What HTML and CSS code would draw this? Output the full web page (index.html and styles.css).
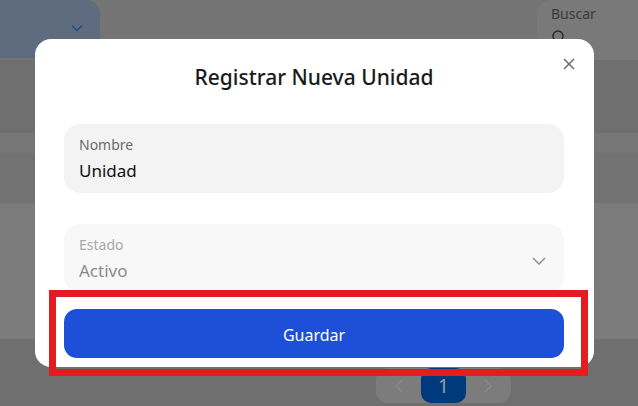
FILE: index.html
```html
<!DOCTYPE html>
<html lang="es">
<head>
<meta charset="utf-8">
<title>Registrar Nueva Unidad</title>
<link rel="stylesheet" href="styles.css">
</head>
<body>
<div class="page">
  <div class="topbar">
    <div class="filter-card">
      <svg class="chev-blue" width="12" height="8" viewBox="0 0 12 8"><path d="M1 1.5 L6 6.5 L11 1.5" fill="none" stroke="#1f4a8a" stroke-width="1.5"/></svg>
    </div>
    <div class="search-card">
      <span class="search-label">Buscar</span>
      <svg class="search-icon" width="14" height="14" viewBox="0 0 14 14"><circle cx="6" cy="6" r="5" fill="none" stroke="#2a2a2a" stroke-width="1.5"/><path d="M9.5 9.5 L13 13" stroke="#2a2a2a" stroke-width="1.5"/></svg>
    </div>
  </div>
  <div class="band band1"></div>
  <div class="band band2"></div>
  <div class="band band3"></div>
  <div class="band band4"></div>
  <div class="band band5">
    <div class="pager">
      <svg width="8" height="14" viewBox="0 0 8 14"><path d="M7 1 L1 7 L7 13" fill="none" stroke="#8c8c8c" stroke-width="1.2"/></svg>
      <span class="page-num">1</span>
      <svg width="8" height="14" viewBox="0 0 8 14"><path d="M1 1 L7 7 L1 13" fill="none" stroke="#8c8c8c" stroke-width="1.2"/></svg>
    </div>
  </div>
</div>

<div class="modal">
  <button class="close" aria-label="Cerrar">
    <svg width="12" height="12" viewBox="0 0 12 12"><path d="M1 1 L11 11 M11 1 L1 11" stroke="#6b6b6b" stroke-width="1.5"/></svg>
  </button>
  <h2 class="title">Registrar Nueva Unidad</h2>
  <div class="field">
    <span class="label">Nombre</span>
    <span class="value">Unidad</span>
  </div>
  <div class="field disabled">
    <div class="field-text">
      <span class="label">Estado</span>
      <span class="value">Activo</span>
    </div>
    <svg class="chev" width="14" height="8" viewBox="0 0 14 8"><path d="M1 1 L7 7 L13 1" fill="none" stroke="#8a8a8a" stroke-width="1.4"/></svg>
  </div>
  <button class="save">Guardar</button>
</div>
<div class="highlight"></div>
</body>
</html>
```
FILE: styles.css
```css
* { box-sizing: border-box; }
html, body {
  margin: 0;
  width: 638px;
  height: 406px;
  overflow: hidden;
  font-family: "Noto Sans", "Open Sans", sans-serif;
}
body { background: #747474; position: relative; }

.page { display: flex; flex-direction: column; height: 406px; }
.topbar {
  height: 60px;
  display: flex;
  justify-content: space-between;
  align-items: flex-start;
  background: #747474;
}
.filter-card {
  width: 100px;
  height: 58px;
  background: #5f6b7e;
  border-radius: 0 14px 0 0;
  position: relative;
}
.chev-blue { position: absolute; left: 71px; top: 24px; }
.search-card {
  width: 101px;
  height: 62px;
  background: #797979;
  border-radius: 14px 0 0 0;
  padding: 4px 0 0 14px;
  display: flex;
  flex-direction: column;
  gap: 6px;
}
.search-label { font-size: 14px; color: #3a3a3a; line-height: 20px; }
.search-icon { margin-left: 1px; }
.band1 { height: 73px; background: #6f6f6f; }
.band2 { height: 20px; background: #777777; }
.band3 { height: 50px; background: #727272; }
.band4 { height: 136px; background: #7b7b7b; }
.band5 { flex: 1; background: #6f6f6f; padding: 29px 0 0 376px; }
.pager {
  width: 135px;
  height: 35px;
  background: #7c7c7c;
  border-radius: 12px;
  display: flex;
  align-items: center;
  justify-content: space-between;
  padding: 0 19px;
}
.page-num {
  width: 45px;
  height: 35px;
  border-radius: 10px;
  background: #003a7c;
  color: #8b9cb4;
  font-size: 19px;
  display: flex;
  align-items: center;
  justify-content: center;
}

.modal {
  position: absolute;
  left: 35px;
  top: 39px;
  width: 559px;
  height: 328px;
  background: #fff;
  border-radius: 16px;
  padding: 24px 30px 0 29px;
  display: flex;
  flex-direction: column;
}
.close {
  position: absolute;
  right: 19px;
  top: 19px;
  border: 0;
  background: none;
  padding: 0;
  width: 12px;
  height: 12px;
  display: flex;
}
.title {
  margin: 0 0 33px;
  text-align: center;
  font-size: 21px;
  line-height: 28px;
  font-weight: 500;
  color: #1a1a1a;
}
.field {
  height: 69px;
  border-radius: 16px;
  background: #f3f3f3;
  padding: 11px 15px 0 15px;
  display: flex;
  flex-direction: column;
}
.field + .field { margin-top: 31px; }
.label { font-size: 14px; line-height: 20px; color: #6a6a6a; }
.value { font-size: 17px; line-height: 24px; color: #111; margin-top: 4px; }
.field.disabled {
  background: #f8f8f8;
  flex-direction: row;
  align-items: flex-start;
  justify-content: space-between;
  padding-right: 18px;
}
.field-text { display: flex; flex-direction: column; }
.disabled .label { color: #a8a8a8; }
.disabled .value { color: #8a8a8a; }
.chev { margin-top: 22px; }
.save {
  margin-top: 16px;
  height: 49px;
  border: 0;
  border-radius: 13px;
  background: #1e4fd8;
  color: #fff;
  font-family: inherit;
  font-size: 16px;
  padding: 3px 0 0;
}
.highlight {
  position: absolute;
  left: 49px;
  top: 290px;
  width: 539px;
  height: 86px;
  border: 7px solid #e51b1f;
}
```
